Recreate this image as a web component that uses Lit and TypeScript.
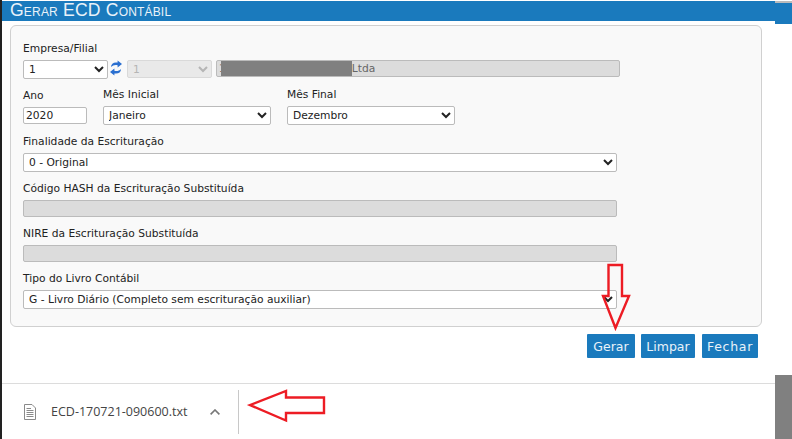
import { LitElement, html, css } from "lit";
import { customElement } from "lit/decorators.js";

const months = ["Janeiro", "Fevereiro", "Março", "Abril", "Maio", "Junho", "Julho", "Agosto", "Setembro", "Outubro", "Novembro", "Dezembro"];

@customElement("app-root")
export class AppRoot extends LitElement {
  static styles = css`
    :host {
      display: block;
      position: relative;
      width: 792px;
      height: 439px;
      overflow: hidden;
      background: #fff;
      font-family: "DejaVu Sans", Verdana, sans-serif;
      font-size: 10.7px;
      color: #222;
    }
    * { box-sizing: border-box; }
    .shell { display: flex; flex-direction: column; height: 100%; margin-left: 2px; width: 773px; }
    .title {
      margin-top: 1px; height: 20px; flex: none; background: #1a7abd; color: #e9f2f9;
      font: 17.6px/18px "Liberation Sans", Arial, sans-serif; font-variant: small-caps;
      letter-spacing: 0.18px; padding-left: 8px;
    }
    .panel {
      margin: 4px 13px 0 8px; height: 302px; flex: none; padding: 15px 12px 0;
      background: #f9f9f9; border: 1px solid #d0d0d0; border-radius: 6px;
      display: flex; flex-direction: column;
    }
    .row { display: flex; align-items: flex-start; }
    label { display: block; height: 14px; line-height: 16px; white-space: nowrap; }
    select, .field {
      display: block; font: 10.7px "DejaVu Sans", Verdana, sans-serif; color: #222;
      border: 1px solid #bbb; border-radius: 2px; background-color: #fff; margin: 0;
    }
    select { height: 19px; padding: 0 0 0 1px; }
    .field { height: 17px; padding: 0 2px; line-height: 15px; }
    .field.off { background: #dcdcdc; color: #666; }
    .col-ano { width: 80px; padding-top: 1px; }
    .col-mes { width: 184px; }
    .w-emp { width: 85px; }
    .w-ano { width: 64px; margin-top: 5px; }
    .w-mes { width: 168px; margin-top: 5px; }
    .w-full { width: 594px; margin-top: 5px; }
    .w-field { width: 594px; margin-top: 5px; }
    .sync { width: 12px; height: 16px; margin: 0 5px 0 2px; flex: none; }
    select.dis { width: 85px; height: 18px; background-color: #e3e3e3; color: #999; border-color: #ccc; margin-right: 4px; }
    .company { width: 404px; display: flex; align-items: center; overflow: hidden; padding-left: 2px; }
    .redact { width: 131px; height: 15px; background: #808080; margin-left: -5px; flex: none; }
    .g1 { margin-top: 8px; }
    .top-row { margin-top: 5px; }
    .sp { margin-top: 9px; }
    .actions { margin: 7px 17px 0 0; display: flex; justify-content: flex-end; gap: 6px; flex: none; }
    button {
      height: 24px; padding: 0; border: 0; border-radius: 1px; background: #1a7abd; color: #e9f2f9;
      font: 12.5px "DejaVu Sans", Verdana, sans-serif;
    }
    .b1 { width: 48px; } .b2 { width: 54px; } .b3 { width: 56px; margin-left: 1px; letter-spacing: 0.7px; }
    .download {
      margin-top: 25px; flex: 1; border-top: 1px solid #dcdcdc; display: flex; align-items: center;
      padding-left: 22px; font: 12.5px "Open Sans", sans-serif; color: #444;
    }
    .doc { width: 12px; height: 16px; margin-right: 15px; flex: none; }
    .fname { width: 159px; white-space: nowrap; }
    .chev { width: 10px; height: 6px; flex: none; }
    .sep { width: 1px; height: 44px; background: #c8c8c8; margin-left: 18px; }
    .stripe { position: absolute; left: 0; top: 0; bottom: 0; width: 2px; background: #222; }
    .notch { position: absolute; left: 775px; top: 3px; width: 17px; height: 21px; background: #1a7abd; }
    .notch-line { position: absolute; left: 775px; top: 1px; width: 17px; height: 2px; background: #bbb; }
    .scroll { position: absolute; left: 775px; top: 375px; width: 17px; height: 64px; background: #808080; }
    .annot { position: absolute; inset: 0; width: 792px; height: 439px; pointer-events: none; }
    .annot polygon { fill: none; stroke: #ed1c24; stroke-width: 2.4; }
  `;

  private opts(items: string[], sel: string) {
    return items.map((m) => html`<option ?selected=${m === sel}>${m}</option>`);
  }

  render() {
    return html`
      <div class="stripe"></div>
      <div class="notch-line"></div>
      <div class="notch"></div>
      <div class="shell">
        <div class="title">Gerar ECD Contábil</div>
        <div class="panel">
          <label>Empresa/Filial</label>
          <div class="row top-row">
            <select class="w-emp"><option>1</option></select>
            <svg class="sync" viewBox="0 0 12 16">
              <path d="M1 7C1 3.5 4 1.8 7.6 2.6L7.6 0.4 12 4 7.6 7.6 7.6 5.2C5 4.6 2.8 5.2 1 7Z" fill="#2a6fd0"/>
              <path d="M11 9C11 12.500 8 14.200 4.400 13.400L4.400 15.600 0 12 4.400 8.400 4.400 10.800C7 11.400 9.200 10.800 11 9Z" fill="#2a6fd0"/>
            </svg>
            <select class="dis" disabled><option>1</option></select>
            <div class="field off company">1<span class="redact"></span>Ltda</div>
          </div>
          <div class="row g1">
            <div class="col-ano">
              <label>Ano</label>
              <div class="field w-ano">2020</div>
            </div>
            <div class="col-mes">
              <label>Mês Inicial</label>
              <select class="w-mes">${this.opts(months, "Janeiro")}</select>
            </div>
            <div>
              <label>Mês Final</label>
              <select class="w-mes">${this.opts(months, "Dezembro")}</select>
            </div>
          </div>
          <label class="sp">Finalidade da Escrituração</label>
          <select class="w-full"><option>0 - Original</option></select>
          <label class="sp">Código HASH da Escrituração Substituída</label>
          <div class="field off w-field"></div>
          <label class="sp">NIRE da Escrituração Substituída</label>
          <div class="field off w-field"></div>
          <label class="sp">Tipo do Livro Contábil</label>
          <select class="w-full"><option>G - Livro Diário (Completo sem escrituração auxiliar)</option></select>
        </div>
        <div class="actions">
          <button class="b1">Gerar</button>
          <button class="b2">Limpar</button>
          <button class="b3">Fechar</button>
        </div>
        <div class="download">
          <svg class="doc" viewBox="0 0 12 16" fill="none" stroke="#8a8a8a">
            <path d="M.5.5H8L11.500 4V15.500H.5Z"/>
            <path d="M2.500 4.500H7M2.500 6.500H9.500M2.500 8.500H9.500M2.500 10.500H9.500M2.500 12.500H9.500"/>
          </svg>
          <span class="fname">ECD-170721-090600.txt</span>
          <svg class="chev" viewBox="0 0 10 6" fill="none" stroke="#777" stroke-width="1.600"><path d="M.6 5.400 5 1 9.400 5.400"/></svg>
          <div class="sep"></div>
        </div>
      </div>
      <div class="scroll"></div>
      <svg class="annot" viewBox="0 0 792 439">
        <polygon points="608.500,265 622,265 622,296 629,296 615.500,328 603,296 608.500,296"/>
        <polygon points="250,405 286,391 286,397.500 324,397.500 324,413 286,413 286,420.500"/>
      </svg>
    `;
  }
}
